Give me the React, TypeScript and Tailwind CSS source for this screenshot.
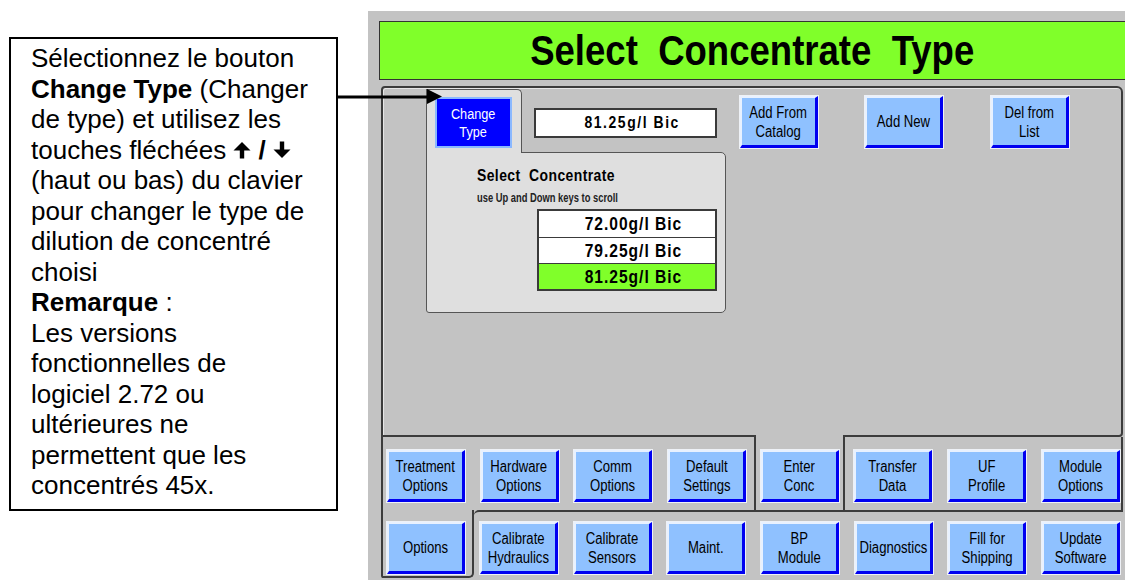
import React from "react";

// texte étroit (police condensée de l'écran machine simulée par un scale-x)
const Narrow = ({ children, className = "" }: { children: React.ReactNode; className?: string }) => (
  <span className={`inline-block whitespace-pre font-['Liberation_Sans',Arial,sans-serif] ${className}`}>{children}</span>
);

// bouton bleu clair de l'écran machine
const Btn = ({ children, className = "" }: { children: React.ReactNode; className?: string }) => (
  <div
    className={`flex h-[52px] w-[78px] shrink-0 items-center justify-center border-t-2 border-l-2 border-r-[3px] border-b-[3px] border-t-[#e8f1ff] border-l-[#e8f1ff] border-r-[#0000f0] border-b-[#0000f0] bg-[#8fc1ff] text-center text-[16px] leading-[19px] text-black shadow-[0_0_0_1px_#eef1f6] ${className}`}
  >
    <Narrow className="scale-x-[0.82]">{children}</Narrow>
  </div>
);

const UpArrow = () => (
  <svg width="18" height="18" viewBox="0 0 18 18" className="mb-[4px] inline-block align-middle">
    <polygon points="9,1 17.5,9.5 0.5,9.5" fill="black" />
    <rect x="6.8" y="9" width="4.4" height="8.5" fill="black" />
  </svg>
);

const DownArrow = () => (
  <svg width="18" height="18" viewBox="0 0 18 18" className="mb-[4px] inline-block align-middle">
    <polygon points="9,17 17.5,8.5 0.5,8.5" fill="black" />
    <rect x="6.8" y="0.5" width="4.4" height="8.5" fill="black" />
  </svg>
);

const concentrates = ["72.00g/l Bic", "79.25g/l Bic", "81.25g/l Bic"];

export default function App() {
  return (
    <div className="relative flex h-[580px] w-[1125px] overflow-hidden bg-white">
      {/* encadré d'explication */}
      <div className="ml-[9px] mt-[37px] h-[474px] w-[329px] shrink-0 whitespace-nowrap border-2 border-black pl-[20px] pt-[4px] font-['Liberation_Sans',Arial,sans-serif] text-[26px] leading-[30.5px] text-black">
        Sélectionnez le bouton
        <br />
        <b>Change Type</b> (Changer
        <br />
        de type) et utilisez les
        <br />
        touches fléchées <UpArrow /> <b>/</b> <DownArrow />
        <br />
        (haut ou bas) du clavier
        <br />
        pour changer le type de
        <br />
        dilution de concentré
        <br />
        choisi
        <br />
        <b>Remarque</b> :
        <br />
        Les versions
        <br />
        fonctionnelles de
        <br />
        logiciel 2.72 ou
        <br />
        ultérieures ne
        <br />
        permettent que les
        <br />
        concentrés 45x.
      </div>

      {/* flèche vers le bouton */}
      <svg className="absolute left-[337px] top-[87px] z-20" width="108" height="20" viewBox="0 0 108 20">
        <line x1="0" y1="10" x2="92" y2="10" stroke="black" strokeWidth="3" />
        <polygon points="90,2 105,9.5 90,17" fill="black" />
      </svg>

      {/* écran */}
      <div className="ml-[30px] mt-[11px] flex h-[569px] flex-1 flex-col items-start bg-[#c3c3c3] pl-[11px] pt-[10px]">
        <div className="flex h-[59px] w-full items-center justify-center border-y-[1.5px] border-l-[1.5px] border-[#333] bg-[#80ff2a]">
          <Narrow className="scale-x-[0.87] text-[42px] font-bold leading-[48px] text-black">Select  Concentrate  Type</Narrow>
        </div>

        {/* panneau principal */}
        <div className="ml-[2px] mt-[6px] flex h-[351px] w-[742px] flex-col rounded-tl-[4px] rounded-tr-[6px] rounded-br-[4px] border-2 border-[#3c3c3c] shadow-[inset_1px_1px_0_#e6e6e6]">
          <div className="mt-[1px] flex items-start pl-[43px]">
            <div className="relative z-10 -mb-px h-[64px] w-[96px] shrink-0 rounded-tr-[5px] border-x border-t border-[#555] bg-[#dfdfdf] pl-[8px] pt-[7px]">
              <div className="flex h-[51px] w-[77px] items-center justify-center border-2 border-[#8ab8ff] bg-[#0000ff] text-center text-[15.5px] leading-[18px] text-white">
                <Narrow className="scale-x-[0.82]">
                  Change
                  <br />
                  Type
                </Narrow>
              </div>
            </div>
            <div className="ml-[12px] mt-[19px] flex h-[30px] w-[183px] shrink-0 items-center justify-center border-2 border-[#3a3a3a] bg-white pl-[14px] text-black">
              <Narrow className="scale-x-[0.82] text-[17px] font-bold tracking-[1.9px]">81.25g/l Bic</Narrow>
            </div>
            <Btn className="ml-[23px] mt-[7px]">
              Add From
              <br />
              Catalog
            </Btn>
            <Btn className="ml-[47px] mt-[7px]">Add New</Btn>
            <Btn className="ml-[48px] mt-[7px]">
              Del from
              <br />
              List
            </Btn>
          </div>

          <div className="ml-[43px] h-[161px] w-[300px] rounded-tr-[5px] rounded-br-[5px] rounded-bl-[3px] border border-[#555] bg-[#dfdfdf] pl-[50px] pt-[10px]">
            <div className="h-[20px]">
              <Narrow className="origin-left scale-x-[0.82] text-[17px] font-bold leading-[20px] tracking-[0.5px] text-black">
                Select  Concentrate
              </Narrow>
            </div>
            <div className="mt-[1px] h-[13px]">
              <Narrow className="origin-left scale-x-[0.72] text-[13px] font-bold leading-[13px] text-[#222]">
                use Up and Down keys to scroll
              </Narrow>
            </div>
            <div className="ml-[60px] mt-[12px] w-[180px] border-2 border-[#3a3a3a] bg-white">
              {concentrates.map((c, i) => (
                <div
                  key={c}
                  className={`flex h-[26px] items-center justify-center pl-[12px] text-black ${
                    i > 0 ? "border-t-[1.5px] border-[#3a3a3a]" : ""
                  } ${i === 2 ? "bg-[#80ff2a]" : "bg-white"}`}
                >
                  <Narrow className="scale-x-[0.82] text-[19px] font-bold leading-[22px] tracking-[1.2px]">{c}</Narrow>
                </div>
              ))}
            </div>
          </div>
        </div>

        {/* onglets rangée 1 */}
        <div className="ml-[2px] flex h-[73px] w-[742px]">
          <div className="flex w-[375px] shrink-0 gap-[15.67px] border-x-2 border-[#3c3c3c] pl-[4px] pt-[13px]">
            <Btn>
              Treatment
              <br />
              Options
            </Btn>
            <Btn>
              Hardware
              <br />
              Options
            </Btn>
            <Btn>
              Comm
              <br />
              Options
            </Btn>
            <Btn>
              Default
              <br />
              Settings
            </Btn>
          </div>
          <div className="relative -mt-[2px] h-[75px] w-[87px] shrink-0 bg-[#c3c3c3] pl-[5px] pt-[15px]">
            <Btn>
              Enter
              <br />
              Conc
            </Btn>
          </div>
          <div className="flex w-[280px] shrink-0 gap-[16px] border-x-2 border-[#3c3c3c] pl-[9px] pt-[13px]">
            <Btn>
              Transfer
              <br />
              Data
            </Btn>
            <Btn>
              UF
              <br />
              Profile
            </Btn>
            <Btn>
              Module
              <br />
              Options
            </Btn>
          </div>
        </div>

        {/* onglets rangée 2 */}
        <div className="ml-[2px] flex h-[70px] w-[742px] items-start">
          <div className="h-[68px] w-[93px] shrink-0 rounded-bl-[2px] rounded-br-[5px] border-x-2 border-b-2 border-[#3c3c3c] pl-[4px] pt-[12px]">
            <Btn>Options</Btn>
          </div>
          <div className="flex h-[70px] flex-1 gap-[15.67px] rounded-tl-[5px] border-t-2 border-[#3c3c3c] pl-[6px] pt-[10px]">
            <Btn>
              Calibrate
              <br />
              Hydraulics
            </Btn>
            <Btn>
              Calibrate
              <br />
              Sensors
            </Btn>
            <Btn>Maint.</Btn>
            <Btn>
              BP
              <br />
              Module
            </Btn>
            <Btn>Diagnostics</Btn>
            <Btn>
              Fill for
              <br />
              Shipping
            </Btn>
            <Btn>
              Update
              <br />
              Software
            </Btn>
          </div>
        </div>
      </div>
    </div>
  );
}
